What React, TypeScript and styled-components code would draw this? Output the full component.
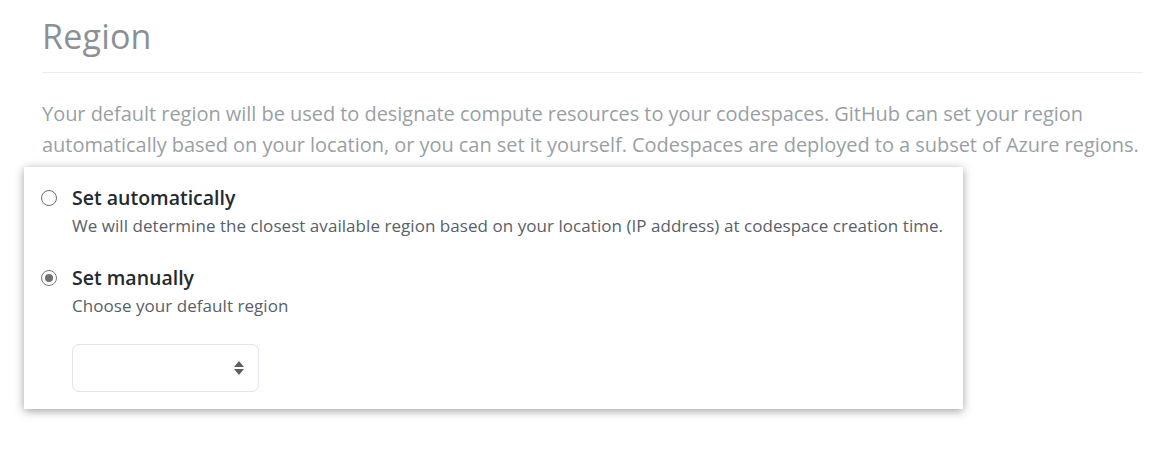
import React from "react";
import styled, { createGlobalStyle } from "styled-components";

const Global = createGlobalStyle`
  html, body { margin: 0; padding: 0; background: #ffffff; }
  body { font-family: "Open Sans", "Noto Sans", sans-serif; }
`;

const Page = styled.div`
  width: 1170px;
  height: 460px;
  box-sizing: border-box;
  padding: 12px 27px 0 24px;
  display: flex;
  flex-direction: column;
`;

const Header = styled.div`
  margin-left: 18px;
  padding-bottom: 12px;
  border-bottom: 1px solid #eaecef;
`;

const Title = styled.h2`
  margin: 0;
  font-size: 34px;
  font-weight: 400;
  line-height: 48px;
  color: #8b9096;
  letter-spacing: 0.2px;
`;

const Lead = styled.p`
  margin: 25px 0 0 18px;
  font-size: 20px;
  line-height: 31px;
  color: #9a9fa5;
  letter-spacing: -0.04px;
`;

const Panel = styled.div`
  margin-top: 7px;
  width: 939px;
  height: 242px;
  box-sizing: border-box;
  background: #ffffff;
  box-shadow: 0 2px 9px rgba(0, 0, 0, 0.38);
  padding: 18px 0 0 17px;
  display: flex;
  flex-direction: column;
  gap: 24px;
`;

const Option = styled.label`
  display: grid;
  grid-template-columns: 16px auto;
  column-gap: 15px;
  align-items: center;
`;

const Radio = styled.span<{ $checked?: boolean }>`
  width: 16px;
  height: 16px;
  box-sizing: border-box;
  border-radius: 50%;
  border: 1.5px solid ${(p) => (p.$checked ? "#777777" : "#6e6e6e")};
  background: #ffffff;
  position: relative;
  &::after {
    content: "";
    display: ${(p) => (p.$checked ? "block" : "none")};
    position: absolute;
    left: 2.5px;
    top: 2.5px;
    width: 8px;
    height: 8px;
    border-radius: 50%;
    background: #707070;
  }
`;

const Label = styled.span`
  font-size: 19.5px;
  font-weight: 600;
  line-height: 26px;
  color: #24292e;
`;

const Note = styled.span`
  grid-column: 2;
  font-size: 17px;
  line-height: 30px;
  color: #586069;
  letter-spacing: 0.05px;
`;

const SelectBox = styled.div`
  grid-column: 2;
  margin-top: 23px;
  width: 187px;
  height: 48px;
  box-sizing: border-box;
  border: 1px solid #e1e4e8;
  border-radius: 7px;
  display: flex;
  align-items: center;
  justify-content: flex-end;
  padding-right: 13px;
`;

const Arrows = () => (
  <svg width="12" height="16" viewBox="0 0 12 16" aria-hidden="true">
    <path d="M6 1 L11 7 H1 Z" fill="#586069" />
    <path d="M6 15 L11 9 H1 Z" fill="#586069" />
  </svg>
);

export default function App() {
  return (
    <>
      <Global />
      <Page>
        <Header>
          <Title>Region</Title>
        </Header>
        <Lead>
          Your default region will be used to designate compute resources to your codespaces. GitHub can set your region
          automatically based on your location, or you can set it yourself. Codespaces are deployed to a subset of Azure
          regions.
        </Lead>
        <Panel>
          <Option>
            <Radio />
            <Label>Set automatically</Label>
            <Note>We will determine the closest available region based on your location (IP address) at codespace creation time.</Note>
          </Option>
          <Option>
            <Radio $checked />
            <Label>Set manually</Label>
            <Note>Choose your default region</Note>
            <SelectBox>
              <Arrows />
            </SelectBox>
          </Option>
        </Panel>
      </Page>
    </>
  );
}
